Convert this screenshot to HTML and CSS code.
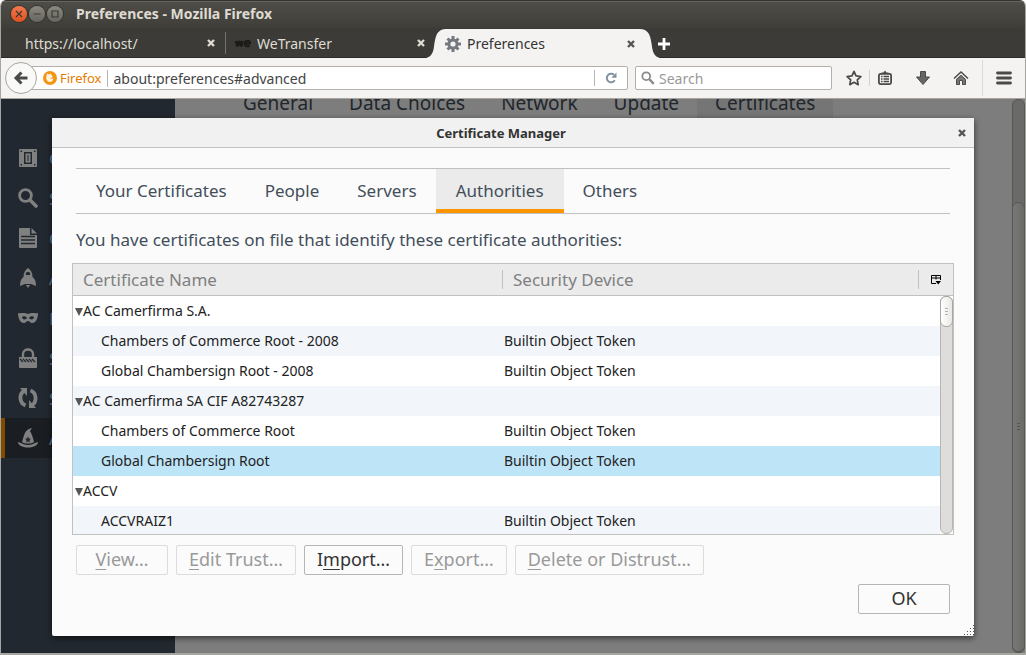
FILE: index.html
```html
<!DOCTYPE html>
<html lang="en">
<head>
<meta charset="utf-8">
<title>Preferences - Mozilla Firefox</title>
<link rel="stylesheet" href="styles.css">
</head>
<body>
<div class="window">
  <header class="titlebar">
    <button class="wm wm-close" aria-label="Close window"><svg viewBox="0 0 16 16"><path d="M5 5l6 6M11 5l-6 6"/></svg></button>
    <button class="wm" aria-label="Minimize window"><svg viewBox="0 0 16 16"><path d="M4.500 8h7"/></svg></button>
    <button class="wm" aria-label="Maximize window"><svg viewBox="0 0 16 16"><path d="M5 5h6v6H5z"/></svg></button>
    <h1 class="window-title">Preferences - Mozilla Firefox</h1>
  </header>

  <div class="tabstrip">
    <div class="tab">
      <span class="tab-label">https://localhost/</span>
      <button class="tab-close" aria-label="Close tab"><svg viewBox="0 0 10 10"><path d="M2 2l6 6M8 2l-6 6"/></svg></button>
    </div>
    <div class="tab tab-divided">
      <svg class="tab-icon" viewBox="0 0 16 16"><path d="M1 6l1.500 4.500 2-3.500 2 3.500L7.500 6" fill="none" stroke="#1b1b1a" stroke-width="3" stroke-linejoin="round"/><path d="M10 8.500h5c0-3.500-5-3.500-5 0s3 3 4.500 2" fill="none" stroke="#1b1b1a" stroke-width="2.200"/></svg>
      <span class="tab-label">WeTransfer</span>
      <button class="tab-close" aria-label="Close tab"><svg viewBox="0 0 10 10"><path d="M2 2l6 6M8 2l-6 6"/></svg></button>
    </div>
    <div class="tab tab-active">
      <svg class="curve curve-left" viewBox="0 0 28 28"><path d="M0 28c6 0 8.500-4 9.500-10C11 7 12 0 22 0h6v28z"/></svg>
      <svg class="curve curve-right" viewBox="0 0 28 28"><path d="M28 28c-6 0-8.500-4-9.500-10C17 7 16 0 6 0H0v28z"/></svg>
      <svg class="tab-icon" viewBox="0 0 16 16"><g stroke="#76787f" stroke-width="3"><path d="M8 0v16M0 8h16M2.500 2.500l11 11M13.500 2.500l-11 11"/></g><circle cx="8" cy="8" r="5.500" fill="#76787f"/><circle cx="8" cy="8" r="2.600" fill="#f4f3f2"/></svg>
      <span class="tab-label">Preferences</span>
      <button class="tab-close" aria-label="Close tab"><svg viewBox="0 0 10 10"><path d="M2 2l6 6M8 2l-6 6"/></svg></button>
    </div>
    <button class="new-tab" aria-label="New tab"><svg viewBox="0 0 14 14"><path d="M7 1v12M1 7h12"/></svg></button>
  </div>

  <nav class="toolbar" aria-label="Navigation">
    <button class="back" aria-label="Back"><svg viewBox="0 0 16 16"><path d="M14.500 8H3.500M8.500 2.500L3 8l5.500 5.500" fill="none" stroke="#4a4a48" stroke-width="3"/></svg></button>
    <div class="urlbar">
      <svg class="identity-icon" viewBox="0 0 14 14"><circle cx="7" cy="7" r="7" fill="#f49413"/><path d="M4 2.500l1.500 1 2-1c.8.500.3 1.500 1.800 2.300 1 1-.3 2.400-2.300 2.400 1 1 2.700.6 3.300-.2 0 2.300-1.300 4-3.500 4S3.200 9 3.200 6.500z" fill="#fff3df"/></svg>
      <span class="identity">Firefox</span>
      <input class="url" type="text" aria-label="Address" value="about:preferences#advanced">
      <button class="reload" aria-label="Reload"><svg viewBox="0 0 12 12"><path d="M9.800 8.200A4.300 4.300 0 1 1 9 2.800" fill="none" stroke="#8290a0" stroke-width="2"/><path d="M11.500.5v5.200H6.300z" fill="#8290a0"/></svg></button>
    </div>
    <label class="searchbar">
      <svg viewBox="0 0 14 14"><circle cx="5.200" cy="5.200" r="3.900" fill="none" stroke="#8b8b8a" stroke-width="1.800"/><path d="M8.200 8.200l4.600 4.600" stroke="#8b8b8a" stroke-width="2.400"/></svg>
      <input type="text" aria-label="Search" placeholder="Search">
    </label>
    <button class="tool tool-star" aria-label="Bookmark this page"><svg viewBox="0 0 16 16"><path d="M8 1.400l2 4.500 4.900.6-3.600 3.300.9 4.900L8 12.300l-4.200 2.400.9-4.900L1.100 6.500 6 5.900z" fill="none" stroke="#4a4a48" stroke-width="1.700" stroke-linejoin="round"/></svg></button>
    <button class="tool tool-clip" aria-label="Show bookmarks"><svg viewBox="0 0 16 16"><rect x="1.900" y="3.900" width="12.200" height="10.200" rx="1.500" fill="none" stroke="#4a4a48" stroke-width="1.800"/><path d="M4.500 4V2.500h2L8 .5l1.500 2h2V4z" fill="#4a4a48"/><path d="M4 6.500h1.500M4 9h1.500M4 11.500h1.500M6.500 6.500H12M6.500 9H12M6.500 11.500H12" stroke="#4a4a48" stroke-width="1.300"/></svg></button>
    <button class="tool" aria-label="Downloads"><svg viewBox="0 0 16 16"><path d="M5.500 1.500h5v5.500h4L8 14.500 1.500 7h4z" fill="#666664" stroke="#4a4a48"/></svg></button>
    <button class="tool" aria-label="Home"><svg viewBox="0 0 16 16"><path d="M1 8.500l7-6.500 7 6.500" fill="none" stroke="#4a4a48" stroke-width="1.500"/><path d="M3.500 9.300L8 5.300l4.500 4v5.200h-3v-4h-3v4h-3z" fill="#777775" stroke="#4a4a48"/></svg></button>
    <button class="tool tool-menu" aria-label="Open menu"><svg viewBox="0 0 16 14"><path d="M1.500 2h13M1.500 7h13M1.500 12h13" stroke="#4a4a48" stroke-width="2.800" stroke-linecap="round"/></svg></button>
  </nav>

  <main class="content">
    <nav class="sidebar" aria-label="Categories">
      <a class="category" href="#general"><svg viewBox="0 0 20 20"><path fill-rule="evenodd" d="M2 1h16a1 1 0 0 1 1 1v16a1 1 0 0 1-1 1H2a1 1 0 0 1-1-1V2a1 1 0 0 1 1-1zM6 4v12h8V4z"/><path d="M7.500 5.500h5v9h-5z"/><path class="hole" d="M9.500 7h1v6h-1zM2.500 2.500h1.500v1.500h-1.500zM16 2.500h1.500v1.500h-1.500zM2.500 16h1.500v1.500h-1.500zM16 16h1.500v1.500h-1.500z"/></svg>General</a>
      <a class="category" href="#search"><svg viewBox="0 0 20 20"><circle cx="7.500" cy="7.500" r="5.900" fill="none" stroke="#808080" stroke-width="2.800"/><path d="M12 12l6 6" stroke="#808080" stroke-width="3.600" stroke-linecap="round"/></svg>Search</a>
      <a class="category" href="#content"><svg viewBox="0 0 20 20"><path d="M1 1a1 1 0 0 1 1-1h10v7h7v12a1 1 0 0 1-1 1H2a1 1 0 0 1-1-1zM13.500 0L19 5.500h-5.500z"/><path class="slit" d="M3 8.500h14M3 12h14M3 15.500h14"/></svg>Content</a>
      <a class="category" href="#applications"><svg viewBox="0 0 20 20"><path d="M10 0c3 2 4.500 5 4.500 9 2 1 3.500 4 3.500 9l-5-2H7l-5 2c0-5 1.500-8 3.500-9 0-4 1.500-7 4.500-9zM8 17h4l-2 3z"/><path class="hole" d="M10 4a2 2 0 0 1 2 3H8a2 2 0 0 1 2-3z"/></svg>Applications</a>
      <a class="category" href="#privacy"><svg viewBox="0 0 20 20"><path fill-rule="evenodd" d="M0 5c3 1 5-1 10 1 5-2 7 0 10-1 0 5-2 10-6 10-2 0-2-2-4-2s-2 2-4 2C2 15 0 10 0 5zm4 4c0 3 4 3 5 1-1-2-4-2-5-1zm12 0c-1-1-4-1-5 1 1 2 5 2 5-1z"/></svg>Privacy</a>
      <a class="category" href="#security"><svg viewBox="0 0 20 20"><path d="M5 9V6c0-6 10-6 10 0v3" fill="none" stroke="#808080" stroke-width="2.400"/><path d="M1 9h18v10a1 1 0 0 1-1 1H2a1 1 0 0 1-1-1z"/><path class="slit" d="M2 11l3 3M5 11l3 3M8 11l3 3M11 11l3 3M14 11l3 3"/></svg>Security</a>
      <a class="category" href="#sync"><svg viewBox="0 0 20 20"><path d="M7.500 17.500C1 15 1 6 6 3M12.500 2.500c6.500 2.500 6.500 11.500 1.500 14.500" fill="none" stroke="#808080" stroke-width="3.800"/><path d="M2 0h7v8zM18 20h-7v-8z"/></svg>Sync</a>
      <a class="category category-current" href="#advanced"><svg viewBox="0 0 20 20"><path d="M4 14C6 9 6 1 14 0l-2 3c2 3 3 7 4 11-3 2-9 2-12 0z"/><path d="M0 14l3 1c4 2.500 10 2.500 14 0l3-1c0 3-4 5.500-10 5.500S0 17 0 14z"/><path class="hole" d="M10 8.500l1 2 2 .3-1.500 1.500.4 2.200-1.900-1-1.900 1 .4-2.200L7 10.800l2-.3z"/></svg>Advanced</a>
    </nav>

    <section class="pane">
      <nav class="subtabs" aria-label="Advanced sections">
        <a href="#general-tab">General</a>
        <a href="#data">Data Choices</a>
        <a href="#network">Network</a>
        <a href="#update">Update</a>
        <a class="subtab-current" href="#certificates">Certificates</a>
      </nav>
    </section>
    <div class="page-scroll"><div class="page-thumb"><span class="grip"></span></div></div>

    <section class="dialog" role="dialog" aria-labelledby="dialog-title">
      <header class="dialog-head">
        <h2 id="dialog-title">Certificate Manager</h2>
        <button class="dialog-close" aria-label="Close dialog"><svg viewBox="0 0 10 10"><path d="M2 2l6 6M8 2l-6 6"/></svg></button>
      </header>
      <div class="dialog-body">
        <div class="cert-tabs" role="tablist">
          <button role="tab">Your Certificates</button>
          <button role="tab">People</button>
          <button role="tab">Servers</button>
          <button role="tab" class="cert-current" aria-selected="true">Authorities</button>
          <button role="tab">Others</button>
        </div>
        <p class="intro">You have certificates on file that identify these certificate authorities:</p>
        <div class="tree">
          <table>
            <thead>
              <tr><th class="col-name">Certificate Name</th><th class="col-device">Security Device</th><th class="col-picker"><button aria-label="Choose columns"><svg viewBox="0 0 10 10"><path d="M5 8.500H.5v-8h9V5M.5 3h9M5 .5v4" fill="none" stroke="#000"/><path d="M4.500 6H10L7.200 9.500z" fill="#000"/></svg></button></th></tr>
            </thead>
            <tbody>
              <tr class="group"><td><button class="twisty" aria-label="Collapse"></button>AC Camerfirma S.A.</td><td></td><td></td></tr>
              <tr><td>Chambers of Commerce Root - 2008</td><td>Builtin Object Token</td><td></td></tr>
              <tr><td>Global Chambersign Root - 2008</td><td>Builtin Object Token</td><td></td></tr>
              <tr class="group"><td><button class="twisty" aria-label="Collapse"></button>AC Camerfirma SA CIF A82743287</td><td></td><td></td></tr>
              <tr><td>Chambers of Commerce Root</td><td>Builtin Object Token</td><td></td></tr>
              <tr class="selected"><td>Global Chambersign Root</td><td>Builtin Object Token</td><td></td></tr>
              <tr class="group"><td><button class="twisty" aria-label="Collapse"></button>ACCV</td><td></td><td></td></tr>
              <tr><td>ACCVRAIZ1</td><td>Builtin Object Token</td><td></td></tr>
            </tbody>
          </table>
          <div class="tree-scroll"><div class="tree-track"><div class="tree-thumb"><span class="grip"></span></div></div></div>
        </div>
        <div class="actions">
          <button disabled><u>V</u>iew…</button>
          <button disabled><u>E</u>dit Trust…</button>
          <button>I<u>m</u>port…</button>
          <button disabled>E<u>x</u>port…</button>
          <button disabled><u>D</u>elete or Distrust…</button>
        </div>
        <div class="confirm"><button>OK</button></div>
      </div>
      <svg class="resizer" viewBox="0 0 11 11"><path d="M10 0h1v1h-1zM7 3h1v1H7zM10 3h1v1h-1zM4 6h1v1H4zM7 6h1v1H7zM10 6h1v1h-1zM1 9h1v1H1zM4 9h1v1H4zM7 9h1v1H7zM10 9h1v1h-1z"/></svg>
    </section>
  </main>
</div>
</body>
</html>
```

FILE: styles.css
```css
* { box-sizing: border-box; }

body {
  margin: 0;
  background: #fff;
  font-family: "Noto Sans", "Open Sans", sans-serif;
  font-size: 14px;
  color: #333;
}

button, input {
  font: inherit;
  color: inherit;
  margin: 0;
  padding: 0;
  border: 0;
  background: none;
}

a { color: inherit; text-decoration: none; }
svg { display: block; flex: none; }

.window {
  display: flex;
  flex-direction: column;
  height: 100vh;
  border: 1px solid #a7a5a0;
  border-top: 0;
  border-bottom-width: 2px;
  border-radius: 6px 6px 0 0;
  overflow: hidden;
}

/* Title bar */
.titlebar {
  display: flex;
  align-items: center;
  gap: 2px;
  height: 28px;
  flex: none;
  padding: 0 0 1px 10px;
  background: linear-gradient(#4e4d47, #3f3e39);
  border-top: 1px solid #35342f;
  box-shadow: inset 0 1px #65645e;
}
.wm {
  width: 16px;
  height: 16px;
  border-radius: 50%;
  background: linear-gradient(#8a8880, #66655e);
  box-shadow: 0 0 0 1px #35342f;
}
.wm svg { width: 16px; height: 16px; fill: none; stroke: #3a3934; stroke-width: 1.2; }
.wm-close { background: linear-gradient(#f4794f, #e0501f); }
.window-title {
  margin: 0 0 0 11px;
  font-size: 14px;
  line-height: 20px;
  font-weight: 700;
  color: #dfdbd2;
}

/* Tabs */
.tabstrip {
  display: flex;
  align-items: flex-end;
  height: 30px;
  flex: none;
  padding-left: 14px;
  background: #3c3b37;
  border-bottom: 1px solid #2c2b28;
}
.tab {
  position: relative;
  display: flex;
  align-items: center;
  gap: 6px;
  width: 210px;
  height: 28px;
  padding: 0 9px 0 10px;
  color: #dfdbd2;
}
.tab-divided::before {
  content: "";
  position: absolute;
  left: 0;
  top: 3px;
  bottom: 3px;
  border-left: 1px solid #74736e;
}
.tab-icon { position: relative; width: 16px; height: 16px; }
.tab-label { position: relative; flex: 1; }
.tab-close { position: relative; }
.tab-close svg, .dialog-close svg { width: 10px; height: 10px; stroke: #dfdbd2; stroke-width: 2.4; }
.tab-active { height: 29px; margin-bottom: -1px; background: #f4f3f2; background-clip: content-box; color: #333; }
.tab-active .tab-close svg, .dialog-close svg { stroke: #555; }
.curve { position: absolute; top: 0; width: 29px; height: 29px; fill: #f4f3f2; }
.curve-left { left: -11px; }
.curve-right { right: -17px; }
.new-tab { margin: 0 0 6px 12px; }
.new-tab svg { width: 14px; height: 14px; stroke: #fff; stroke-width: 2.8; }

/* Navigation toolbar */
.toolbar {
  display: flex;
  align-items: center;
  height: 41px;
  flex: none;
  padding: 0 10px 0 4px;
  background: #f4f3f2;
  border-bottom: 1px solid #a9a69f;
}
.back {
  position: relative;
  display: grid;
  place-items: center;
  width: 32px;
  height: 32px;
  flex: none;
  border: 1px solid #a9a69f;
  border-radius: 50%;
  background: #f9f9f8;
}
.back svg { width: 16px; height: 16px; }
.urlbar {
  display: flex;
  align-items: center;
  flex: 1;
  height: 24px;
  margin-left: -8px;
  padding-left: 13px;
  background: #fff;
  border: 1px solid #b3b0aa;
  border-radius: 2px;
}
.identity-icon { width: 14px; height: 14px; }
.identity { margin-left: 3px; padding-right: 5px; line-height: 17px; font-size: 13px; color: #e87b00; border-right: 1px solid #b8b6b2; }
.url { flex: 1; min-width: 0; padding-left: 6px; color: #444; }
.reload { padding: 2px 10px; border-left: 1px solid #b8b6b2; }
.reload svg { width: 12px; height: 12px; }
.searchbar {
  display: flex;
  align-items: center;
  gap: 4px;
  width: 197px;
  height: 24px;
  margin: 0 14px 0 7px;
  padding-left: 5px;
  background: #fff;
  border: 1px solid #b3b0aa;
  border-radius: 2px;
}
.searchbar svg { width: 14px; height: 14px; }
.searchbar input { flex: 1; min-width: 0; }
.searchbar input::placeholder { color: #999; opacity: 1; }
.tool { margin-right: 22px; }
.tool svg { width: 16px; height: 16px; }
.tool-star { margin-right: 7px; }
.tool-clip { padding-left: 7px; border-left: 1px solid #d3d1ce; }
.tool-menu { height: 36px; margin: 0 3px 0 -9px; padding-left: 13px; border-left: 1px solid #dddbd8; }

/* Dimmed preferences page */
.content {
  position: relative;
  display: flex;
  flex: 1;
  min-height: 0;
  overflow: hidden;
  background: #7d7d7d;
}
.sidebar { width: 174px; flex: none; padding-top: 39px; background: #22282f; }
.category {
  display: flex;
  align-items: center;
  gap: 11px;
  height: 40px;
  padding-left: 17px;
  font-size: 17px;
  color: #5d7a96;
}
.category svg { width: 20px; height: 20px; fill: #808080; }
.category .hole { fill: #22282f; }
.category .slit { fill: none; stroke: #22282f; stroke-width: 1.3; }
.category-current { padding-left: 13px; border-left: 4px solid #804b00; background: #1a1e22; }
.pane { flex: 1; min-width: 0; }
.subtabs { display: flex; margin: -17px 0 0 50px; font-size: 19px; line-height: 42px; color: #20262c; }
.subtabs a { padding: 0 18px; }
.subtab-current { background: #757575; }
.page-scroll {
  width: 13px;
  border: 1px solid #575755;
  border-radius: 6px;
  background: #6a6a68;
}
.page-thumb {
  display: grid;
  place-items: center;
  height: calc(100% - 102px);
  margin: 102px -1px 0;
  border: 1px solid #575755;
  border-radius: 6px;
  background: linear-gradient(90deg, #787876, #6a6a67);
}
.grip { width: 3px; height: 8px; background: repeating-linear-gradient(#555 0 1px, transparent 1px 3px); }

/* Certificate Manager */
.dialog {
  position: absolute;
  inset: 19px 51px 17px;
  display: flex;
  flex-direction: column;
  background: #fbfbfb;
  border-radius: 2px;
  box-shadow: 0 2px 6px rgba(0, 0, 0, .6);
}
.dialog-head {
  display: flex;
  align-items: center;
  height: 30px;
  flex: none;
  padding-right: 7px;
  background: #f1f1f1;
  border-bottom: 1px solid #c1c1c1;
}
.dialog-head h2 { flex: 1; margin: 0 7px 0 0; text-align: center; font-size: 13px; font-weight: 700; color: #333; }
.dialog-body { display: flex; flex-direction: column; flex: 1; min-height: 0; padding: 20px 20px 22px; }
.cert-tabs {
  display: flex;
  height: 46px;
  flex: none;
  margin: 0 4px;
  border: solid #c1c1c1;
  border-width: 1px 0;
  font-size: 17px;
  color: #424e5a;
}
.cert-tabs button { padding: 0 19px 2px; }
.cert-tabs button:first-child { padding-left: 20px; }
.cert-tabs .cert-current { padding: 2px 20px 0; background: #ebebeb; border-bottom: 4px solid #ff9500; }
.intro { margin: 13px 4px 10px; font-size: 17px; line-height: 26px; color: #424e5a; }
.tree {
  position: relative;
  flex: 1;
  min-height: 0;
  overflow: hidden;
  background: #fff;
  border: 1px solid #c1c1c1;
}
.tree table { width: 100%; table-layout: fixed; border-collapse: separate; border-spacing: 0; }
.tree th {
  height: 32px;
  padding: 0 0 0 10px;
  background: #ebebeb;
  border-bottom: 1px solid #c1c1c1;
  font-size: 17px;
  line-height: 19px;
  font-weight: 400;
  text-align: left;
  color: #808080;
}
.tree .col-name { width: 429px; }
.tree .col-picker { width: 35px; }
.tree .col-device, .tree .col-picker {
  padding-left: 11px;
  background: linear-gradient(#c1c1c1, #c1c1c1) 0 50% / 1px 19px no-repeat #ebebeb;
}
.col-picker button { display: block; margin-left: 2px; }
.col-picker svg { width: 10px; height: 10px; }
.tree td { height: 30px; padding: 0 0 0 2px; line-height: 20px; color: #222; white-space: nowrap; }
.tree td:first-child { padding-left: 28px; }
.tree .group td:first-child { padding-left: 2px; }
.tree tbody tr:nth-child(even) { background: #f2f6fb; }
.tree tbody .selected:nth-child(even) { background: #bee4f7; }
.twisty {
  width: 8px;
  height: 8px;
  vertical-align: 0;
  background: #555;
  clip-path: polygon(0 0, 100% 0, 50% 100%);
}
.tree-scroll { position: absolute; top: 32px; right: 0; bottom: 0; width: 13px; background: #fff; }
.tree-track { height: 100%; border: 1px solid #b9b6b1; border-radius: 6px; background: #dedddb; }
.tree-thumb {
  display: grid;
  place-items: center;
  height: 31px;
  margin: -1px;
  border: 1px solid #a9a69f;
  border-radius: 6px;
  background: linear-gradient(90deg, #fff, #e9e8e6);
}
.tree-thumb .grip { background: repeating-linear-gradient(#b5b3af 0 1px, transparent 1px 3px); }

.actions, .confirm { display: flex; flex: none; gap: 8px; margin: 10px 4px 0; }
.confirm { justify-content: flex-end; margin-top: 9px; }
.actions button, .confirm button {
  height: 30px;
  min-width: 92px;
  padding: 0 12px 2px;
  border: 1px solid #b5b5b5;
  border-radius: 2px;
  background: #fbfbfb;
  font-size: 18px;
  line-height: 26px;
  color: #333;
}
.actions button:disabled { color: #999; border-color: #dcdcdc; }
.actions u { text-underline-offset: 3px; text-decoration-thickness: 1px; }
.resizer { position: absolute; right: 0; bottom: 0; width: 11px; height: 11px; fill: #555; }
```
